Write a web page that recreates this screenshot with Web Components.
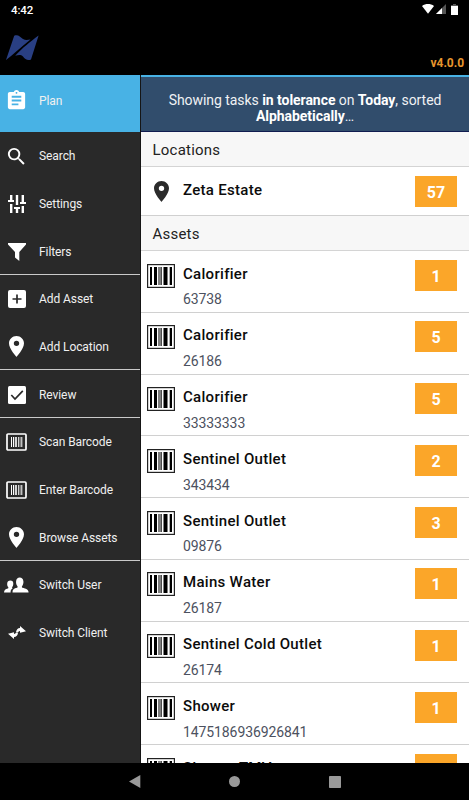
<!DOCTYPE html>
<html lang="en">
<head>
<meta charset="utf-8">
<title>Tasks</title>
<style>
html,body{margin:0;height:100%;overflow:hidden;background:#000}
body{font-family:Roboto,"Liberation Sans",sans-serif}
</style>
</head>
<body>
<task-app></task-app>
<script>
const icons = {
  plan:['0 0 24 24',23,23,'<path d="M19 3h-4.180C14.400 1.840 13.300 1 12 1s-2.400.84-2.820 2H5c-1.100 0-2 .9-2 2v14c0 1.100.9 2 2 2h14c1.100 0 2-.9 2-2V5c0-1.100-.9-2-2-2zm-7 0c.55 0 1 .45 1 1s-.45 1-1 1-1-.45-1-1 .45-1 1-1zm2 14H7v-2h7v2zm3-4H7v-2h10v2zm0-4H7V7h10v2z"/>'],
  search:['0 0 24 24',23,23,'<path d="M15.500 14h-.79l-.28-.27A6.470 6.470 0 0 0 16 9.500 6.500 6.500 0 1 0 9.500 16c1.610 0 3.090-.59 4.230-1.570l.27.28v.79l5 4.990L20.490 19l-4.990-5zm-6 0a4.500 4.500 0 1 1 0-9 4.500 4.500 0 0 1 0 9z"/>'],
  settings:['0 0 18 18',18,18,'<path d="M2 0h2.400v5H6v2H0V5h2zM2 9h2.400v9H2zM7.800 0h2.400v10H7.800zM6 12h6v2h-1.800v4H7.800v-4H6zM13.600 0H16v7h2v2h-6V7h1.600zM13.600 11H16v7h-2.400z"/>'],
  filter:['0 0 18 18',18,18,'<path d="M0 0h18v1.500L11.300 9v9L7 14.500V9L0 1.500z"/>'],
  add:['0 0 18 18',18,18,'<path d="M2 0h14a2 2 0 0 1 2 2v14a2 2 0 0 1-2 2H2a2 2 0 0 1-2-2V2a2 2 0 0 1 2-2z"/><path d="M9 4.500v9M4.500 9h9" stroke="#292929" stroke-width="1.700"/>'],
  pin:['5 2 14 20',15,21,'<path d="M12 2C8.130 2 5 5.130 5 9c0 5.250 7 13 7 13s7-7.750 7-13c0-3.870-3.130-7-7-7zm0 9.500a2.500 2.500 0 1 1 0-5 2.500 2.500 0 0 1 0 5z"/>'],
  review:['0 0 18 18',18,18,'<rect width="18" height="18" rx="1.500"/><path d="M3.300 9l3.700 4L14.800 4.800" fill="none" stroke="#292929" stroke-width="1.700"/>'],
  scan:['0 0 21 18',21,18,'<rect x="1" y="1" width="19" height="16" rx="1" fill="none" stroke="currentColor" stroke-width="1.700"/><path d="M5 4h1v10H5zM7 4h1.200v10H7zM9.200 4h1.600v10H9.200zM12 4h.8v10H12zM13.700 4h.7v10h-.7zM15.300 4h1v10h-1z"/>'],
  users:['0 0 25 16',25,16,'<path d="M8.500 15.500c-.2-3 1.500-4 4.500-4.700.8-.3.800-1.200.3-1.900-1-1.300-1.400-2.900-1.200-4.700C12.400 1.500 13.700.4 15.700.4s3.400 1.100 3.700 3.800c.2 1.800-.3 3.400-1.200 4.700-.5.700-.5 1.600.3 1.900 3.500 1 5.800 1.500 6.100 4.700z"/><path d="M0 15.500c.1-2.500 1.500-3.200 3.800-4 .8-.3.700-1 .2-1.700-.7-1-.9-2-.8-3.400.2-2 1.300-2.900 3.100-2.900 2 0 3.200 1.200 3 3.400-.1 1.300-.4 2.200-1 3-.4.600-.3 1.100.2 1.500-1.500.8-2 2-1.900 4.100z"/>'],
  client:['0 0 18 13',18,13,'<path d="M8 5.700Q9 1.800 12 1.900V0l6 5.300-6 1.400V5.100Q10.500 5 9.800 6.800z"/><path d="M10 7.300Q9 11.200 6 11.100V13L0 7.700l6-1.400v1.600Q7.500 8 8.200 6.200z"/>'],
  barcode:['0 0 28 24',28,24,'<rect x=".6" y=".6" width="26.800" height="22.800" fill="#fff" stroke="#222" stroke-width="1.200"/><path fill="#000" d="M3 3h2v18H3zM7 3h3v18H7zM11.500 3h1v18h-1zM13.500 3h1.200v18h-1.200zM16.500 3h4v18h-4zM22.700 3h2.300v18h-2.300z"/>'],
  logo:['0 0 33 27',33,27,'<g fill="#293f83"><path d="M0 26L8.200 1.700C12 .3 14 2.500 17 5.100c2.500 1.400 4.600.9 7.500.4C14.500 13.500 7.700 20.200 0 26z"/><path d="M32.600 1.600L25 25.500c-3.300 1.500-6-.3-8-3-2.200-2-4.500-1.500-7.800-.8C17 13.500 24 8 32.600 1.600z"/></g>'],
  wifi:['0 0 12 10',12,10,'<path d="M0 2C3.600-.6 8.400-.6 12 2L6 9.800z"/>'],
  signal:['0 0 10 10',10,10,'<path d="M10 0v10H0z" fill="#555"/><path d="M6 4v6H0z"/>'],
  battery:['0 0 7 11',7,11,'<path d="M2 0h3v1h2v10H0V1h2z" fill="#555"/><path d="M0 2h7v9H0z"/>'],
  back:['0 0 12 13',12,13,'<path d="M11.300 0v13L0 6.500z"/>'],
  home:['0 0 12 12',11,11,'<circle cx="6" cy="6" r="6"/>'],
  recent:['0 0 12 12',12,12,'<rect width="12" height="12" rx=".8"/>']
};
function define(name, render){
  customElements.define(name, class extends HTMLElement{
    constructor(){ super(); this.attachShadow({mode:'open'}); }
    connectedCallback(){ this.shadowRoot.innerHTML = render(this); }
  });
}
define('ui-icon', el => {
  const [box,w,h,body] = icons[el.getAttribute('name')];
  return `<style>:host{display:inline-flex;flex:none}svg{display:block}</style><svg width="${w}" height="${h}" viewBox="${box}" preserveAspectRatio="none" fill="currentColor">${body}</svg>`;
});
define('status-bar', () => `<style>
:host{display:flex;justify-content:space-between;height:19px;box-sizing:border-box;padding:4px 11px 0 11px;color:#fff;font-size:11.500px;line-height:12px;font-weight:500;letter-spacing:-.1px}
div{display:flex;gap:2px}ui-icon:last-child{margin-left:3px}
</style><span>4:42</span><div><ui-icon name="wifi"></ui-icon><ui-icon name="signal"></ui-icon><ui-icon name="battery"></ui-icon></div>`);
define('app-header', () => `<style>
:host{display:flex;justify-content:space-between;height:56px;box-sizing:border-box;padding:15px 5px 0 6px}
span{color:#e8962e;font-weight:700;font-size:12px;line-height:14px;margin-top:22px;letter-spacing:-.03px}
</style><ui-icon name="logo"></ui-icon><span>v4.0.0</span>`);
define('nav-item', el => `<style>
:host{display:flex;align-items:center;height:47.670px;box-sizing:border-box;padding-top:2px;color:#fff;border-bottom:1px solid transparent}
:host([divider]){border-color:#c9c9c9}
:host([active]){height:57px;background:#48b2e5;padding-bottom:7px}
div{width:33px;display:flex;justify-content:center;margin-right:6px}
span{font-size:12px;line-height:16px;letter-spacing:-.08px;color:#f0f0f0;white-space:nowrap}
</style><div><ui-icon name="${el.getAttribute('icon')}"></ui-icon></div><span><slot></slot></span>`);
define('side-nav', () => `<style>:host{display:block;background:#292929;overflow:hidden;border-right:1px solid #151515;box-sizing:border-box}nav-item[active]{margin-right:-1px}</style>
<nav-item icon="plan" active>Plan</nav-item><nav-item icon="search">Search</nav-item><nav-item icon="settings">Settings</nav-item><nav-item icon="filter" divider>Filters</nav-item><nav-item icon="add">Add Asset</nav-item><nav-item icon="pin" divider>Add Location</nav-item><nav-item icon="review" divider>Review</nav-item><nav-item icon="scan">Scan Barcode</nav-item><nav-item icon="scan">Enter Barcode</nav-item><nav-item icon="pin" divider>Browse Assets</nav-item><nav-item icon="users">Switch User</nav-item><nav-item icon="client">Switch Client</nav-item>`);
define('task-banner', () => `<style>
:host{display:block;height:57px;box-sizing:border-box;border-top:2px solid #48b2e5;border-bottom:1px solid #101c50;background:#314d6c;color:#f0f2f4;text-align:center;font-size:14px;line-height:16px;padding:15px 0 0;letter-spacing:-.05px}
b{color:#fff}
</style>Showing tasks <b>in tolerance</b> on <b>Today</b>, sorted<br><b>Alphabetically</b>…`);
define('section-title', () => `<style>
:host{display:block;height:35px;box-sizing:border-box;background:#f7f7f7;border-bottom:1px solid #d4d4d4;padding:8px 11.500px 0;font-size:15px;line-height:20px;letter-spacing:.22px;color:#222}
</style><slot></slot>`);
define('task-row', el => {
  const code = el.getAttribute('code'), count = el.getAttribute('count') || '';
  return `<style>
:host{display:flex;align-items:flex-start;box-sizing:border-box;height:${code?'61.750px':'49px'};padding:0 12px 0 6px;border-bottom:1px solid #d0d0d0;background:#fff;color:#2b2b2b}
.i{width:28px;display:flex;justify-content:center;margin:${code?'12.500px':'14px'} 8px 0 0}
.t{flex:1;padding-top:12.700px;white-space:nowrap}
.n{font-size:15px;line-height:20px;font-weight:500;letter-spacing:.3px;color:#0c0c0c}
.c{font-size:14px;line-height:18px;margin-top:6.600px;color:#4c5160;letter-spacing:-.1px}
.b{width:42px;height:31px;margin-top:8.500px;background:#fba629;color:#fff;font-size:16px;line-height:33px;font-weight:700;text-align:center}
</style><div class="i"><ui-icon name="${code?'barcode':'pin'}"></ui-icon></div><div class="t"><div class="n"><slot></slot></div>${code?`<div class="c">${code}</div>`:''}</div><div class="b">${count}</div>`;
});
define('task-list', () => `<style>:host{display:block;background:#fff;overflow:hidden}</style>
<task-banner></task-banner><section-title>Locations</section-title><task-row count="57">Zeta Estate</task-row><section-title>Assets</section-title>
<task-row code="63738" count="1">Calorifier</task-row><task-row code="26186" count="5">Calorifier</task-row><task-row code="33333333" count="5">Calorifier</task-row><task-row code="343434" count="2">Sentinel Outlet</task-row><task-row code="09876" count="3">Sentinel Outlet</task-row><task-row code="26187" count="1">Mains Water</task-row><task-row code="26174" count="1">Sentinel Cold Outlet</task-row><task-row code="1475186936926841" count="1">Shower</task-row><task-row code=" ">Shower TMV</task-row>`);
define('system-nav', () => `<style>:host{display:flex;justify-content:center;align-items:center;gap:88.500px;height:37px;color:#999}</style><ui-icon name="back"></ui-icon><ui-icon name="home"></ui-icon><ui-icon name="recent"></ui-icon>`);
define('task-app', () => `<style>
:host{display:grid;grid-template-rows:19px 56px 688px 37px;width:469px;height:800px;background:#000}
main{display:grid;grid-template-columns:141px 328px;min-height:0;overflow:hidden}
</style><status-bar></status-bar><app-header></app-header><main><side-nav></side-nav><task-list></task-list></main><system-nav></system-nav>`);
</script>
</body>
</html>
